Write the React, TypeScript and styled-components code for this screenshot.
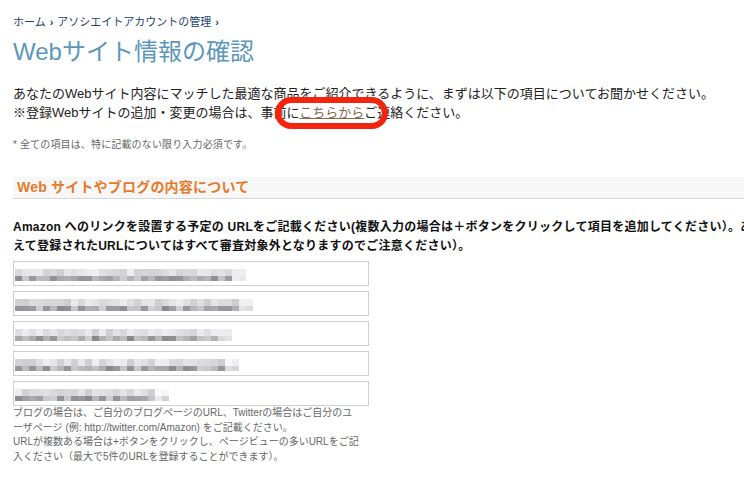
import React from 'react'
import styled, {createGlobalStyle} from 'styled-components'

const GlobalStyle = createGlobalStyle`
  html, body {
    margin: 0;
    padding: 0;
    background: #fff;
    overflow: hidden;
  }
  body {
    font-family: 'Liberation Sans', 'Noto Sans CJK JP', sans-serif;
    color: #222;
  }
`

const Page = styled.div`
  position: relative;
  width: 744px;
  height: 477px;
  overflow: hidden;
  padding-left: 13px;
  box-sizing: border-box;
`

const Breadcrumb = styled.div`
  padding-top: 15px;
  font-size: 11px;
  line-height: 14px;
  color: #1d3f73;
  white-space: nowrap;
`

const Crumb = styled.a`
  color: #1d3f73;
  text-decoration: none;
`

const Chevron = styled.span`
  margin: 0 4px;
  font-size: 11px;
  font-weight: bold;
`

const Title = styled.h1`
  margin: 8px 0 0;
  font-size: 24px;
  line-height: 30px;
  font-weight: normal;
  color: #5b97bb;
  white-space: nowrap;
`

const Lead = styled.p`
  margin: 17px 0 0;
  font-size: 13px;
  line-height: 19px;
  color: #222;
  white-space: nowrap;
`

const InlineLink = styled.a`
  color: #86694d;
  text-decoration: underline;
`

const Note = styled.p`
  margin: 16px 0 0;
  font-size: 10px;
  line-height: 14px;
  color: #666;
  letter-spacing: 0.15px;
`

const SectionHeader = styled.div`
  margin-top: 25px;
  width: 760px;
  height: 21px;
  background: #f7f7f7;
  border-bottom: 1px solid #d6d6d6;
  padding-left: 4px;
  font-size: 14px;
  line-height: 21px;
  font-weight: bold;
  color: #e47b2c;
  white-space: nowrap;
  letter-spacing: 0.2px;
`

const Question = styled.p`
  margin: 19px 0 0;
  font-size: 12px;
  line-height: 19px;
  font-weight: bold;
  color: #111;
  white-space: nowrap;
  letter-spacing: 0.25px;
`

const Fields = styled.div`
  margin-top: 5px;
  display: flex;
  flex-direction: column;
  gap: 5px;
  width: 356px;
`

const Field = styled.div`
  height: 25px;
  border: 1px solid #cfcfcf;
  box-sizing: border-box;
  background: #fff;
  display: flex;
  align-items: flex-start;
  padding: 7px 0 0 1px;
`

const Help = styled.p`
  margin: 0;
  font-size: 10px;
  line-height: 14.5px;
  color: #666;
  white-space: nowrap;
`

const Annotation = styled.div`
  position: absolute;
  left: 275px;
  top: 97px;
  width: 113px;
  height: 32px;
  border: 6px solid #f4250e;
  border-radius: 18px;
  box-sizing: border-box;
`

// pixelated (masked) URL value inside each field
const Mosaic: React.FC<{cells: number; seed: number}> = ({cells, seed}) => {
  let s = seed
  const rnd = () => {
    s = (s * 9301 + 49297) % 233280
    return s / 233280
  }
  const rects: React.ReactElement[] = []
  for (let i = 0; i < cells; i++) {
    const fade = i > cells - 3 ? 0.4 : 1
    const top = Math.round(255 - (15 + rnd() * 35) * fade)
    const bottom = Math.round(255 - (45 + rnd() * 75) * fade)
    rects.push(
      <rect key={`t${i}`} x={i * 7} y={0} width={7} height={7} fill={`rgb(${top},${top},${top + 2})`} />,
      <rect key={`b${i}`} x={i * 7} y={7} width={7} height={5} fill={`rgb(${bottom},${bottom},${bottom + 3})`} />,
    )
  }
  return (
    <svg width={cells * 7} height={12} style={{display: 'block'}}>
      {rects}
    </svg>
  )
}

const fields = [
  {cells: 33, seed: 11},
  {cells: 34, seed: 42},
  {cells: 31, seed: 7},
  {cells: 32, seed: 91},
  {cells: 22, seed: 23},
]

const App: React.FC = () => {
  return (
    <Page>
      <GlobalStyle />
      <Breadcrumb>
        <Crumb>ホーム</Crumb>
        <Chevron>›</Chevron>
        <Crumb>アソシエイトアカウントの管理</Crumb>
        <Chevron>›</Chevron>
      </Breadcrumb>
      <Title>Webサイト情報の確認</Title>
      <Lead>
        あなたのWebサイト内容にマッチした最適な商品をご紹介できるように、まずは以下の項目についてお聞かせください。
        <br />
        ※登録Webサイトの追加・変更の場合は、事前に<InlineLink>こちらから</InlineLink>ご連絡ください。
      </Lead>
      <Note>* 全ての項目は、特に記載のない限り入力必須です。</Note>
      <SectionHeader>Web サイトやブログの内容について</SectionHeader>
      <Question>
        Amazon へのリンクを設置する予定の URLをご記載ください(複数入力の場合は＋ボタンをクリックして項目を追加してください）。あ
        <br />
        えて登録されたURLについてはすべて審査対象外となりますのでご注意ください）。
      </Question>
      <Fields>
        {fields.map((f, index) => (
          <Field key={`field-${index}`}>
            <Mosaic cells={f.cells} seed={f.seed} />
          </Field>
        ))}
      </Fields>
      <Help>
        ブログの場合は、ご自分のブログページのURL、Twitterの場合はご自分のユ
        <br />
        ーザページ (例: http://twitter.com/Amazon) をご記載ください。
        <br />
        URLが複数ある場合は+ボタンをクリックし、ページビューの多いURLをご記
        <br />
        入ください（最大で5件のURLを登録することができます）。
      </Help>
      <Annotation />
    </Page>
  )
}

export default App
